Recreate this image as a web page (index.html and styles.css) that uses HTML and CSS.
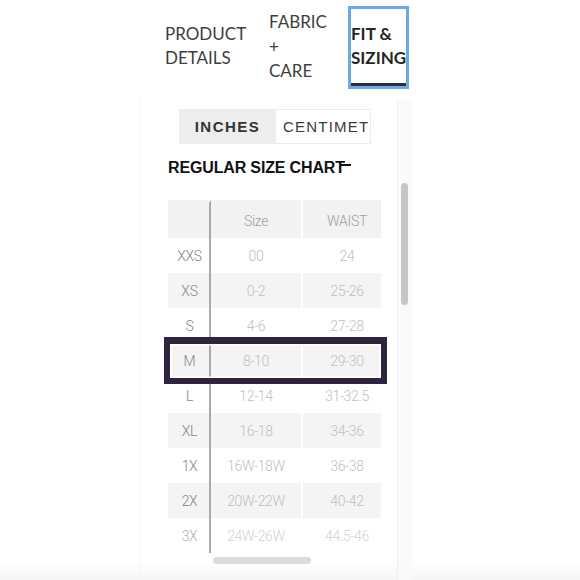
FILE: index.html
```html
<!DOCTYPE html>
<html>
<head>
<meta charset="utf-8">
<link rel="stylesheet" href="styles.css">
</head>
<body>
<div class="page">
  <nav class="tabs">
    <div class="tab tab-product">PRODUCT<br>DETAILS</div>
    <div class="tab tab-fabric">FABRIC<br>+<br>CARE</div>
    <div class="tab tab-fit">FIT &amp;<br>SIZING<span class="tab-bar"></span></div>
  </nav>
  <section class="panel">
    <div class="panel-main">
      <div class="toggle">
        <div class="toggle-on">INCHES</div>
        <div class="toggle-off">CENTIMET</div>
      </div>
      <h2 class="chart-title">REGULAR SIZE CHART<span class="title-mark"></span></h2>
      <div class="chart-wrap">
        <div class="chart-clip">
          <div class="chart">
            <div class="cell lab head"></div><div class="cell c2 head hv">Size</div><div class="cell head hv">WAIST</div>
            <div class="cell lab">XXS</div><div class="cell c2 v">00</div><div class="cell v">24</div>
            <div class="cell lab g">XS</div><div class="cell c2 v g">0-2</div><div class="cell v g">25-26</div>
            <div class="cell lab">S</div><div class="cell c2 v">4-6</div><div class="cell v">27-28</div>
            <div class="cell lab g">M</div><div class="cell c2 v g">8-10</div><div class="cell v g">29-30</div>
            <div class="cell lab">L</div><div class="cell c2 v">12-14</div><div class="cell v">31-32.5</div>
            <div class="cell lab g">XL</div><div class="cell c2 v g">16-18</div><div class="cell v g">34-36</div>
            <div class="cell lab">1X</div><div class="cell c2 v">16W-18W</div><div class="cell v">36-38</div>
            <div class="cell lab g">2X</div><div class="cell c2 v g">20W-22W</div><div class="cell v g">40-42</div>
            <div class="cell lab fade">3X</div><div class="cell c2 v fade">24W-26W</div><div class="cell v fade">44.5-46</div>
          </div>
        </div>
        <div class="highlight"></div>
      </div>
      <div class="hscroll"></div>
    </div>
    <div class="vscroll"><div class="vthumb"></div></div>
  </section>
</div>
</body>
</html>
```
FILE: styles.css
```css
html, body {
  margin: 0;
  padding: 0;
  background: #ffffff;
}
.page {
  width: 580px;
  height: 580px;
  overflow: hidden;
  position: relative;
  background: linear-gradient(to bottom, #ffffff 0, #ffffff 560px, #f6f6f6 580px);
}
.tabs {
  display: flex;
  align-items: flex-start;
  height: 100px;
  padding-left: 165px;
  box-sizing: border-box;
  font-family: Lato, "Open Sans", sans-serif;
  font-size: 17px;
  color: #3e3e3e;
}
.tab-product {
  width: 104px;
  margin-top: 22px;
  line-height: 24px;
}
.tab-fabric {
  width: 79px;
  margin-top: 10px;
  line-height: 24.5px;
}
.tab-fit {
  margin-top: 6px;
  width: 61px;
  box-sizing: border-box;
  border: 3px solid #6aa9e9;
  padding-top: 13px;
  line-height: 24px;
  font-weight: 700;
  color: #262626;
  white-space: nowrap;
}
.tab-bar {
  display: block;
  height: 3px;
  margin-top: 13px;
  background: #2b3039;
}
.panel {
  display: flex;
  margin-left: 140px;
  height: 480px;
}
.panel-main {
  width: 256px;
  border-left: 1px solid #f5f5f5;
}
.toggle {
  display: flex;
  width: 192px;
  height: 35px;
  margin: 9px 0 0 38px;
  font-family: "Liberation Sans", Arial, sans-serif;
  font-size: 15px;
  line-height: 35px;
  letter-spacing: 1.5px;
}
.toggle-on {
  width: 97px;
  background: #ededed;
  text-align: center;
  font-weight: 700;
  color: #333;
}
.toggle-off {
  flex: 1;
  box-sizing: border-box;
  border: 1px solid #ececec;
  border-left: none;
  line-height: 33px;
  padding-left: 7px;
  overflow: hidden;
  white-space: nowrap;
  color: #3a3a3a;
  letter-spacing: 1.2px;
}
.chart-title {
  margin: 14px 0 0 27px;
  font-family: "Liberation Sans", Arial, sans-serif;
  font-weight: 700;
  font-size: 16px;
  line-height: 20px;
  color: #111;
  letter-spacing: -0.15px;
}
.title-mark {
  display: inline-block;
  width: 10px;
  height: 2px;
  background: #111;
  margin-left: -4px;
  vertical-align: 7px;
}
.chart-wrap {
  position: relative;
  margin: 22px 0 0 27px;
  width: 213px;
}
.chart-clip {
  width: 213px;
  overflow: hidden;
}
.chart {
  display: grid;
  grid-template-columns: 43px 92px 88px;
  grid-template-rows: 38px repeat(9, 35px);
  width: 223px;
  font-family: Roboto, "Liberation Sans", Arial, sans-serif;
  font-weight: 300;
  font-size: 14px;
  letter-spacing: -0.3px;
}
.cell {
  display: flex;
  align-items: center;
  justify-content: center;
  color: #c0c0c0;
  box-sizing: border-box;
}
.cell.lab {
  border-right: 2px solid #a9a9a9;
  color: #858585;
  padding-left: 2px;
}
.cell.c2 {
  border-right: 2px solid #ffffff;
}
.cell.head {
  background: #f2f2f2;
  padding-top: 4px;
}
.cell.lab.head {
  border-top: 3px solid #f2f2f2;
  background-clip: padding-box;
}
.cell.hv {
  color: #9e9e9e;
}
.cell.g {
  background: #f4f4f4;
}
.cell.fade {
  color: #d2d2d2;
}
.cell.lab.fade {
  color: #b0b0b0;
}
.highlight {
  position: absolute;
  left: -4px;
  top: 137px;
  width: 223px;
  height: 47px;
  box-sizing: border-box;
  border-style: solid;
  border-color: #2f2440;
  border-width: 7px 6px 6px 6px;
  box-shadow: inset 0 0 0 1.5px #ffffff;
}
.hscroll {
  width: 98px;
  height: 7px;
  margin: 4px 0 0 72px;
  border-radius: 4px;
  background: #dcdcdc;
}
.vscroll {
  width: 14px;
  border-left: 1px solid #efefef;
  background: #fafafa;
}
.vthumb {
  width: 7px;
  height: 122px;
  margin: 83px 0 0 3px;
  border-radius: 4px;
  background: #c6c6c6;
}
```
